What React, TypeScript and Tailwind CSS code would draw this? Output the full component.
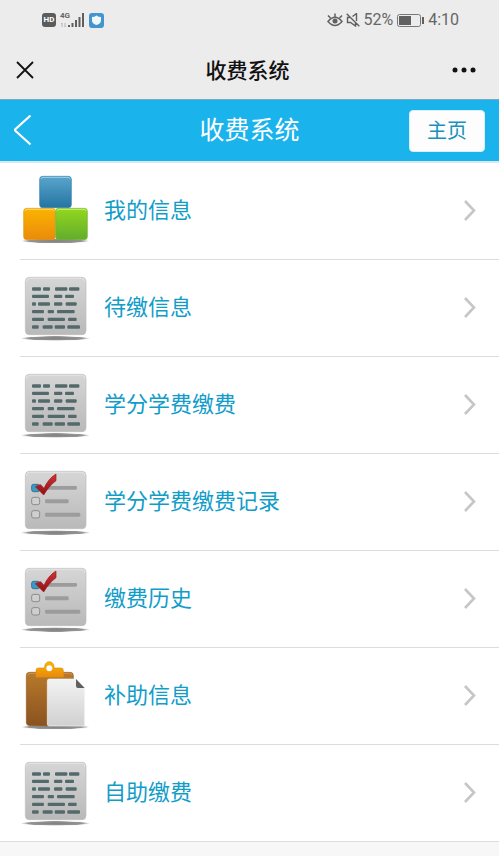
import React from 'react';

type IconKind = 'blocks' | 'document' | 'checklist' | 'clipboard';

const menuItems: { id: number; label: string; icon: IconKind }[] = [
  { id: 1, label: '我的信息', icon: 'blocks' },
  { id: 2, label: '待缴信息', icon: 'document' },
  { id: 3, label: '学分学费缴费', icon: 'document' },
  { id: 4, label: '学分学费缴费记录', icon: 'checklist' },
  { id: 5, label: '缴费历史', icon: 'checklist' },
  { id: 6, label: '补助信息', icon: 'clipboard' },
  { id: 7, label: '自助缴费', icon: 'document' },
];

// Gradients shared by all the list icons
const IconDefs: React.FC = () => (
  <svg width="0" height="0" className="absolute" aria-hidden="true">
    <defs>
      <linearGradient id="blue" x1="0" y1="0" x2="0" y2="1">
        <stop offset="0" stopColor="#5aa5cc" />
        <stop offset="1" stopColor="#2475a3" />
      </linearGradient>
      <linearGradient id="orange" x1="0" y1="0" x2="0" y2="1">
        <stop offset="0" stopColor="#fbb400" />
        <stop offset="1" stopColor="#ea8a0c" />
      </linearGradient>
      <linearGradient id="green" x1="0" y1="0" x2="0" y2="1">
        <stop offset="0" stopColor="#92d71f" />
        <stop offset="1" stopColor="#63ad2c" />
      </linearGradient>
      <linearGradient id="gray" x1="0" y1="0" x2="0" y2="1">
        <stop offset="0" stopColor="#d6d6d6" />
        <stop offset="1" stopColor="#b9b9b9" />
      </linearGradient>
      <linearGradient id="brown" x1="0" y1="0" x2="0" y2="1">
        <stop offset="0" stopColor="#b87a2b" />
        <stop offset="1" stopColor="#8a5220" />
      </linearGradient>
      <linearGradient id="paper" x1="0" y1="0" x2="0" y2="1">
        <stop offset="0" stopColor="#f3f3f3" />
        <stop offset="1" stopColor="#d0d0d0" />
      </linearGradient>
      <linearGradient id="red" x1="0" y1="0" x2="0" y2="1">
        <stop offset="0" stopColor="#d03434" />
        <stop offset="1" stopColor="#8f1016" />
      </linearGradient>
      <radialGradient id="shadow">
        <stop offset="0" stopColor="#808080" />
        <stop offset="0.8" stopColor="#959595" />
        <stop offset="1" stopColor="#bbbbbb" stopOpacity="0.2" />
      </radialGradient>
    </defs>
  </svg>
);

const BlocksIcon: React.FC = () => (
  <svg viewBox="30 30 216 216" className="size-[72px] shrink-0" aria-hidden="true">
    <ellipse cx="136" cy="228" rx="101" ry="7" fill="url(#shadow)" />
    <rect x="89" y="34" width="95" height="94" rx="9" fill="url(#blue)" stroke="#347fa8" strokeWidth="2" />
    <path d="M93 42q1-5 6-5h75q5 0 6 5" fill="none" stroke="#9dd0e8" strokeWidth="3" />
    <rect x="41" y="130" width="95" height="94" rx="9" fill="url(#orange)" stroke="#e39512" strokeWidth="2" />
    <path d="M45 138q1-5 6-5h75q5 0 6 5" fill="none" stroke="#fddc72" strokeWidth="3" />
    <rect x="137" y="130" width="95" height="94" rx="9" fill="url(#green)" stroke="#72b52a" strokeWidth="2" />
    <path d="M141 138q1-5 6-5h75q5 0 6 5" fill="none" stroke="#c6f07b" strokeWidth="3" />
  </svg>
);

// [x, y, width] of each dash of writing on the page
const dashes = [
  [66, 72, 27], [99, 72, 21], [135, 72, 37], [177, 72, 31],
  [66, 94, 51], [132, 94, 25], [165, 94, 27],
  [66, 117, 12], [84, 117, 36], [132, 117, 25], [167, 117, 33],
  [66, 140, 36], [113, 140, 19], [141, 140, 53],
  [66, 163, 36], [113, 163, 52], [174, 163, 26],
  [66, 186, 20], [98, 186, 30], [134, 186, 31], [172, 186, 38],
];

const DocumentIcon: React.FC = () => (
  <svg viewBox="30 21 216 216" className="size-[72px] shrink-0" aria-hidden="true">
    <ellipse cx="136" cy="220" rx="103" ry="7" fill="url(#shadow)" />
    <rect x="46" y="37" width="182" height="172" rx="12" fill="url(#gray)" stroke="#bcbcbc" strokeWidth="2" />
    <path d="M49 50q0-10 10-10h156q10 0 10 10" fill="none" stroke="#e4e4e4" strokeWidth="3" />
    {dashes.map(([x, y, w]) => (
      <rect key={`${x}-${y}`} x={x} y={y - 5} width={w} height="10" rx="3" fill="#54696b" />
    ))}
  </svg>
);

const ChecklistIcon: React.FC = () => (
  <svg viewBox="30 12 216 216" className="size-[72px] shrink-0" aria-hidden="true">
    <ellipse cx="136" cy="212" rx="103" ry="7" fill="url(#shadow)" />
    <rect x="46" y="28" width="182" height="172" rx="12" fill="url(#gray)" stroke="#bcbcbc" strokeWidth="2" />
    <path d="M49 41q0-10 10-10h156q10 0 10 10" fill="none" stroke="#e4e4e4" strokeWidth="3" />
    <rect x="105" y="72" width="96" height="11" rx="4" fill="#9c9c9c" />
    <rect x="105" y="112" width="71" height="12" rx="4" fill="#9c9c9c" />
    <rect x="105" y="152" width="106" height="12" rx="4" fill="#9c9c9c" />
    <rect x="65" y="67" width="24" height="22" rx="6" fill="#3b9bc9" stroke="#34738f" strokeWidth="3" />
    <rect x="65" y="106" width="24" height="22" rx="6" fill="#cfcfcf" stroke="#8a8a8a" strokeWidth="3" />
    <rect x="65" y="146" width="24" height="22" rx="6" fill="#cfcfcf" stroke="#8a8a8a" strokeWidth="3" />
    <path d="M76 74l16-6 10 11c8-18 19-33 36-43v20c-16 12-26 25-37 43z" fill="url(#red)" stroke="#9c1b20" strokeWidth="2" />
  </svg>
);

const ClipboardIcon: React.FC = () => (
  <svg viewBox="30 15 216 216" className="size-[72px] shrink-0" aria-hidden="true">
    <ellipse cx="136" cy="216" rx="101" ry="7" fill="url(#shadow)" />
    <rect x="49" y="52" width="141" height="160" rx="10" fill="url(#brown)" stroke="#8f5b22" strokeWidth="2" />
    <path d="M53 61q1-6 7-6h119q6 0 7 6" fill="none" stroke="#d6a15c" strokeWidth="2" />
    <path
      d="M78 66V46q0-7 7-7h17q2 0 2-4a14 15 0 0 1 28 0q0 4 2 4h19q7 0 7 7v20z"
      fill="url(#orange)"
      stroke="#dc960e"
      strokeWidth="2"
    />
    <circle cx="118" cy="40" r="9" fill="#ffffff" />
    <path d="M118 72h80l26 27v114H118q-6 0-6-6V78q0-6 6-6z" fill="url(#paper)" stroke="#f6f6f6" strokeWidth="2" />
    <path d="M198 72l26 27h-20q-6 0-6-6z" fill="#5f5f5f" />
  </svg>
);

const icons: Record<IconKind, React.FC> = {
  blocks: BlocksIcon,
  document: DocumentIcon,
  checklist: ChecklistIcon,
  clipboard: ClipboardIcon,
};

const StatusBar: React.FC = () => (
  <div className="flex h-10 items-center justify-between pl-[42px] pr-10 text-[#666666]">
    <div className="flex items-center gap-1">
      <span className="flex h-[14px] w-[14px] items-center justify-center rounded-[3px] bg-[#5c5c5c] text-[8px] font-bold text-white">
        HD
      </span>
      {/* Signal strength */}
      <span className="relative flex h-4 w-[25px] items-end justify-end">
        <span className="absolute left-0 top-0 text-[8px] font-bold leading-[8px]">4G</span>
        <svg width="25" height="16" viewBox="0 0 25 16" aria-hidden="true">
          <path d="M2 15v-4l-1 1M5 11v4l1-1" fill="none" stroke="#b5b5b5" />
          <path d="M9 15v-2M12.500 15v-4M16 15V8M19.500 15V5M23 15V1" fill="none" stroke="#5f5f5f" strokeWidth="2" />
        </svg>
      </span>
      <svg width="15" height="15" viewBox="0 0 15 15" aria-hidden="true">
        <rect width="15" height="15" rx="3" fill="#4495cf" />
        <path d="M7.500 2.500q2 1.500 4.500 1.500v3.500q0 3-4.500 4.500Q3 10.500 3 7.500V4q2.500 0 4.500-1.500z" fill="#eef8fc" />
      </svg>
    </div>
    <div className="flex items-center gap-1 text-base">
      <div className="flex items-center gap-0.5">
        <svg width="16" height="14" viewBox="0 0 16 14" fill="none" stroke="#606060" strokeWidth="1.500" aria-hidden="true">
          <path d="M1 8.500q7-8.500 14 0-7 8-14 0zM8 3.500V.5M3.500 5L1 2.500M12.500 5L15 2.500" />
          <circle cx="8" cy="8" r="2.500" fill="#606060" stroke="none" />
        </svg>
        <svg width="16" height="14" viewBox="0 0 16 14" fill="none" stroke="#606060" strokeWidth="1.400" aria-hidden="true">
          <path d="M1.700.7l12.600 12.600M4.500 4.500H2.500v5h3l5 3.500V9.500M7.500 3.500l4-3v7.500" />
        </svg>
        <span>52%</span>
      </div>
      <svg width="27" height="13" viewBox="0 0 27 13" aria-hidden="true">
        <rect x=".5" y=".5" width="23" height="12" rx="2" fill="none" stroke="#777777" />
        <rect x="2" y="2" width="12" height="9" fill="#606060" />
        <path d="M26 3v7" stroke="#606060" strokeWidth="2" />
      </svg>
      <span>4:10</span>
    </div>
  </div>
);

const App: React.FC = () => {
  return (
    <div className="min-h-screen bg-[#f7f7f7] font-['Roboto','Noto_Sans_CJK_SC',sans-serif]">
      <IconDefs />

      <div className="bg-[#ececec]">
        <StatusBar />
        <div className="grid h-[59px] grid-cols-[1fr_auto_1fr] items-center pl-4 pr-5">
          <button type="button" aria-label="关闭" className="justify-self-start">
            <svg width="18" height="18" viewBox="0 0 18 18" stroke="#111111" strokeWidth="1.800" aria-hidden="true">
              <path d="M1 1l16 16M17 1L1 17" />
            </svg>
          </button>
          <span className="pt-0.5 text-[21px] font-medium leading-6 text-[#111111]">收费系统</span>
          <button type="button" aria-label="更多" className="justify-self-end">
            <svg width="28" height="6" viewBox="0 0 28 6" fill="#111111" aria-hidden="true">
              <circle cx="4" cy="3" r="2.500" />
              <circle cx="13" cy="3" r="2.500" />
              <circle cx="22" cy="3" r="2.500" />
            </svg>
          </button>
        </div>
      </div>

      <header className="grid h-16 grid-cols-[1fr_auto_1fr] items-center border-b-2 border-t border-b-[#d5e9f3] border-t-[#78a9bf] bg-[#1ab3ec] px-[14px]">
        <button type="button" aria-label="返回" className="justify-self-start">
          <svg width="18" height="32" viewBox="0 0 18 32" fill="none" stroke="#ffffff" strokeWidth="2.200" aria-hidden="true">
            <path d="M16.500 0.500L0.500 15l16 14.500" />
          </svg>
        </button>
        <h1 className="text-[25px] leading-8 text-white">收费系统</h1>
        <button
          type="button"
          className="h-[42px] w-[76px] justify-self-end rounded border border-[#d9eef8] bg-[#fdfdfd] text-xl text-[#1791bd]"
        >
          主页
        </button>
      </header>

      <ul className="border-b border-[#dcdcdc] bg-white">
        {menuItems.map((item, index) => {
          const Icon = icons[item.icon];
          const last = index === menuItems.length - 1;
          return (
            <li key={item.id} className="pl-5">
              <a
                href="#"
                className={`flex items-center gap-3 pr-[22px] ${last ? 'h-24' : 'h-[97px] border-b border-[#dcdcdc]'}`}
              >
                <Icon />
                <span className="flex-1 text-[22px] leading-7 text-[#129dc9]">{item.label}</span>
                <svg width="14" height="22" viewBox="0 0 14 22" fill="none" stroke="#c6c6c6" strokeWidth="2.600" aria-hidden="true">
                  <path d="M2 1l9 9.500L2 20" />
                </svg>
              </a>
            </li>
          );
        })}
      </ul>
    </div>
  );
};

export default App;
